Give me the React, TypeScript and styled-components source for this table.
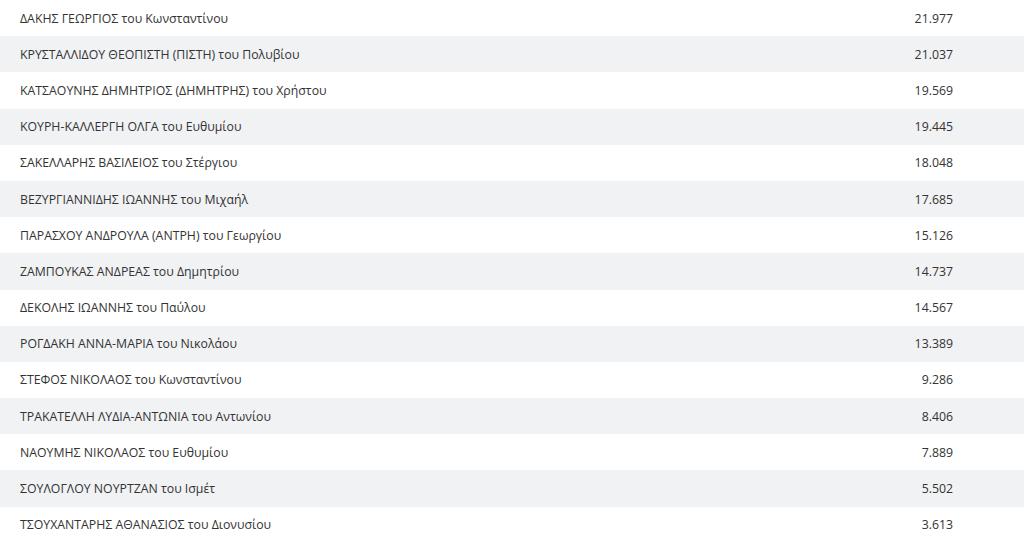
import React from 'react'
import styled, { createGlobalStyle } from 'styled-components'

const GlobalStyle = createGlobalStyle`
  body {
    margin: 0;
    background: #fff;
    font-family: 'Open Sans', 'Noto Sans', sans-serif;
    color: #333;
  }
`

const Table = styled.div`
  display: flex;
  flex-direction: column;
  width: 1024px;
`

const Row = styled.div<{ $shaded: boolean }>`
  display: grid;
  grid-template-columns: 1fr 120px;
  align-items: center;
  height: 36.2px;
  padding: 0 71px 0 20px;
  background: ${({ $shaded }) => ($shaded ? '#f1f2f4' : '#fff')};
  font-size: 12.3px;
`

const Name = styled.span`
  white-space: nowrap;
`

const Votes = styled.span`
  text-align: right;
`

const candidates: [string, string][] = [
  ['ΔΑΚΗΣ ΓΕΩΡΓΙΟΣ του Κωνσταντίνου', '21.977'],
  ['ΚΡΥΣΤΑΛΛΙΔΟΥ ΘΕΟΠΙΣΤΗ (ΠΙΣΤΗ) του Πολυβίου', '21.037'],
  ['ΚΑΤΣΑΟΥΝΗΣ ΔΗΜΗΤΡΙΟΣ (ΔΗΜΗΤΡΗΣ) του Χρήστου', '19.569'],
  ['ΚΟΥΡΗ-ΚΑΛΛΕΡΓΗ ΟΛΓΑ του Ευθυμίου', '19.445'],
  ['ΣΑΚΕΛΛΑΡΗΣ ΒΑΣΙΛΕΙΟΣ του Στέργιου', '18.048'],
  ['ΒΕΖΥΡΓΙΑΝΝΙΔΗΣ ΙΩΑΝΝΗΣ του Μιχαήλ', '17.685'],
  ['ΠΑΡΑΣΧΟΥ ΑΝΔΡΟΥΛΑ (ΑΝΤΡΗ) του Γεωργίου', '15.126'],
  ['ΖΑΜΠΟΥΚΑΣ ΑΝΔΡΕΑΣ του Δημητρίου', '14.737'],
  ['ΔΕΚΟΛΗΣ ΙΩΑΝΝΗΣ του Παύλου', '14.567'],
  ['ΡΟΓΔΑΚΗ ΑΝΝΑ-ΜΑΡΙΑ του Νικολάου', '13.389'],
  ['ΣΤΕΦΟΣ ΝΙΚΟΛΑΟΣ του Κωνσταντίνου', '9.286'],
  ['ΤΡΑΚΑΤΕΛΛΗ ΛΥΔΙΑ-ΑΝΤΩΝΙΑ του Αντωνίου', '8.406'],
  ['ΝΑΟΥΜΗΣ ΝΙΚΟΛΑΟΣ του Ευθυμίου', '7.889'],
  ['ΣΟΥΛΟΓΛΟΥ ΝΟΥΡΤΖΑΝ του Ισμέτ', '5.502'],
  ['ΤΣΟΥΧΑΝΤΑΡΗΣ ΑΘΑΝΑΣΙΟΣ του Διονυσίου', '3.613'],
]

const App: React.FC = () => (
  <>
    <GlobalStyle />
    <Table>
      {candidates.map(([name, votes], i) => (
        <Row key={name} $shaded={i % 2 === 1}>
          <Name>{name}</Name>
          <Votes>{votes}</Votes>
        </Row>
      ))}
    </Table>
  </>
)

export default App
